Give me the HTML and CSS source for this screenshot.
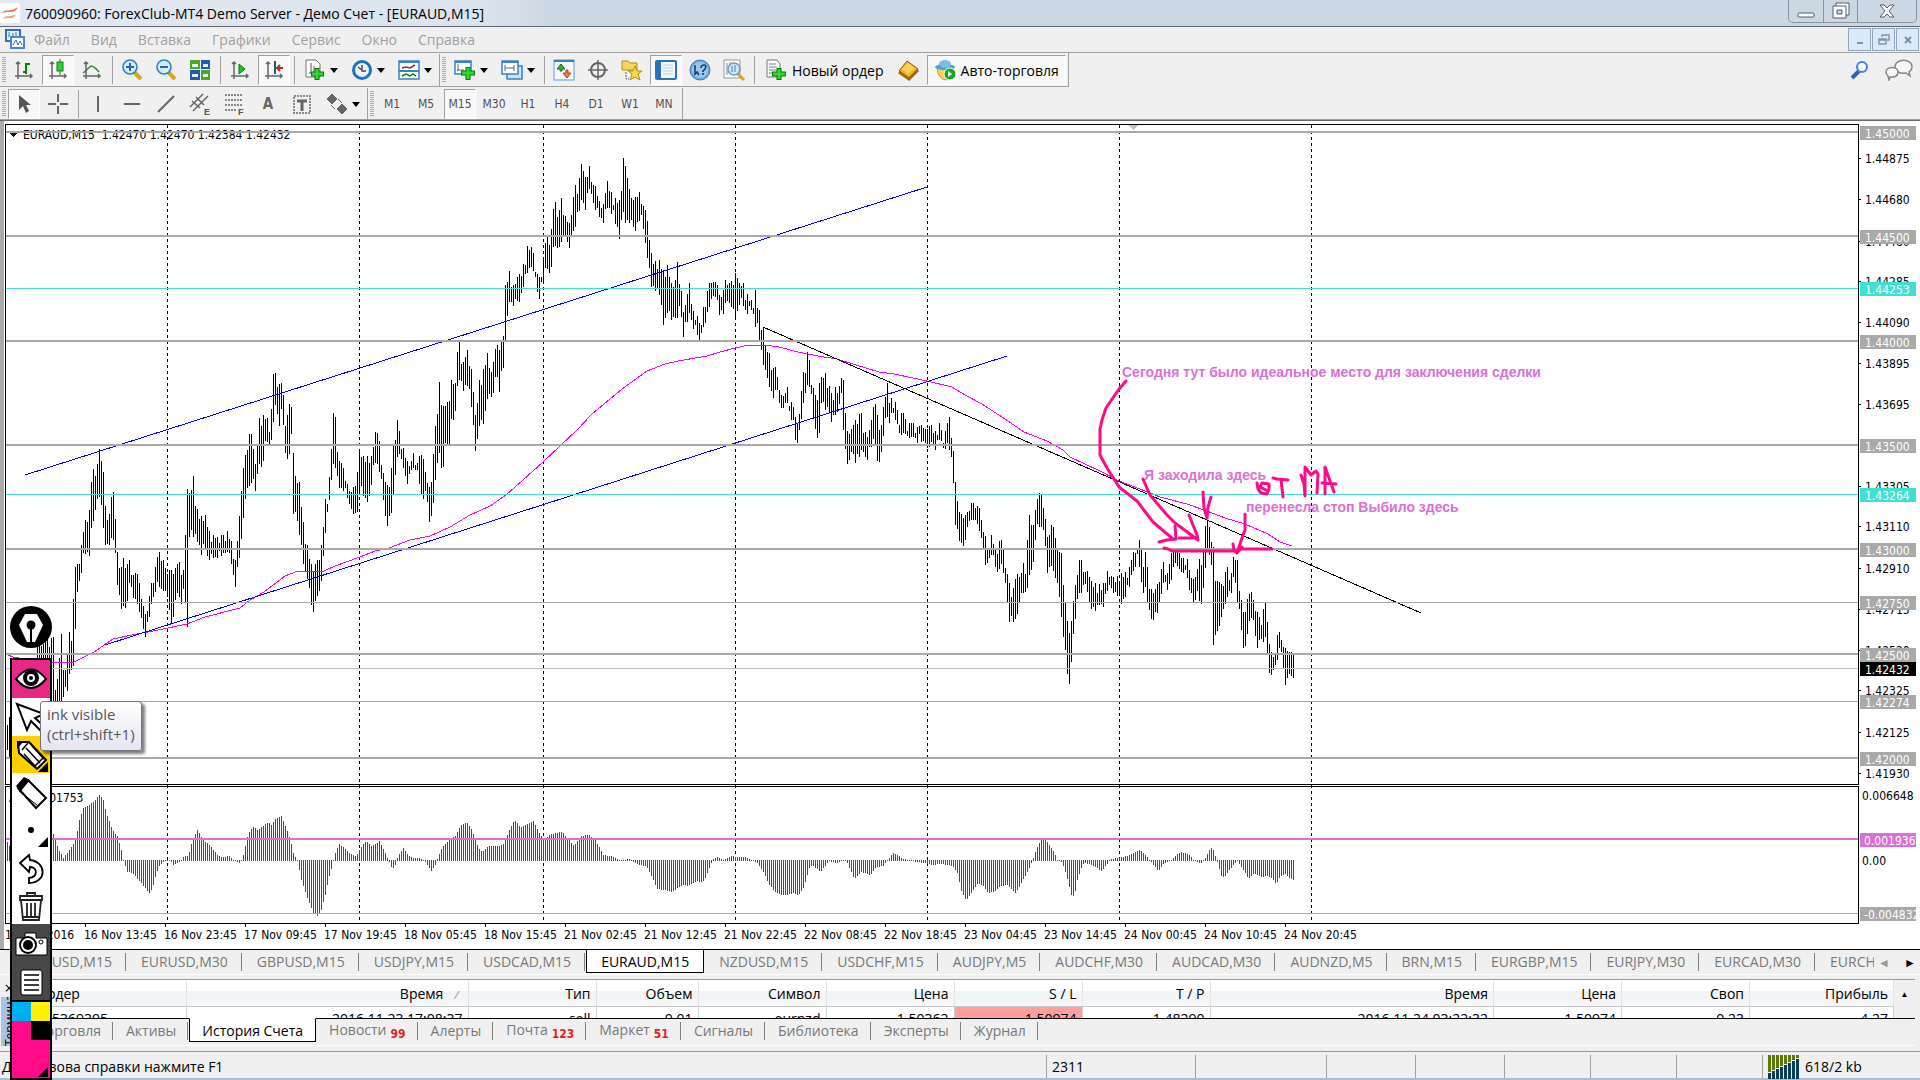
FILE: index.html
```
<!DOCTYPE html>
<html lang="ru">
<head>
  <meta charset="utf-8">
  <title>ForexClub-MT4</title>
  <link rel="stylesheet" href="styles.css">
</head>
<body>
  <header class="titlebar">
    <svg class="app-icon" width="20" height="20" viewBox="0 0 20 20"><rect width="20" height="20" rx="2" fill="#fff"/><path d="M2 10c4-5 7 0 16-6-2 5-6 5-9 5s-4 0-7 1z" fill="#f07840"/><path d="M3 16c3-5 7-1 13-5-2 5-6 4-8 4s-3 0-5 1z" fill="#f2a070"/></svg>
    <h1>760090960: ForexClub-MT4 Demo Server - Демо Счет - [EURAUD,M15]</h1>
    <div class="win-buttons">
      <button aria-label="Свернуть"><svg width="18" height="18"><rect x="1" y="11" width="16" height="4" rx="1" fill="#fff" stroke="#555a68"/></svg></button>
      <button aria-label="Развернуть"><svg width="18" height="18"><path d="M4 1h13v12H4z" fill="#fff" stroke="#555a68"/><path d="M1 4h13v12H1z" fill="#fff" stroke="#555a68"/><path d="M5 8h5v4H5z" fill="#ccd5e2" stroke="#555a68"/></svg></button>
      <button class="wide" aria-label="Закрыть"><svg width="18" height="18"><path d="M2 3h4l3 3 3-3h4l-5 6 5 6h-4l-3-3-3 3H2l5-6z" fill="#fff" stroke="#555a68"/></svg></button>
    </div>
  </header>

  <nav class="menubar">
    <svg width="22" height="22" viewBox="0 0 22 22"><path d="M2 1h14v11H2z" fill="#e8f2fc" stroke="#2f6fc4" stroke-width="2"/><path d="M5 3v5M9 4v5M12 3v4" stroke="#2f6fc4"/><path d="M7 8h13v11H7z" fill="#fff" stroke="#4a86d8" stroke-width="2"/><path d="M9 16l3-5 2 5 2-4 2 4" fill="none" stroke="#2f6fc4"/></svg>
    <button>Файл</button><button>Вид</button><button>Вставка</button><button>Графики</button><button>Сервис</button><button>Окно</button><button>Справка</button>
    <div class="mdi-buttons">
      <button aria-label="Свернуть окно"><svg width="12" height="12"><path d="M3 9h6" stroke="#7f93a8" stroke-width="2"/></svg></button>
      <button aria-label="Восстановить окно"><svg width="12" height="12"><path d="M4 3V1h7v5H9M1 5h7v5H1zM1 6h7" fill="none" stroke="#7f93a8" stroke-width="1.4"/></svg></button>
      <button aria-label="Закрыть окно"><svg width="12" height="12"><path d="M3 3l6 6M9 3l-6 6" stroke="#7f93a8" stroke-width="2"/></svg></button>
    </div>
  </nav>

  <div class="toolbar-row">
    <div class="toolbar">
      <i class="grip"></i>
      <button aria-label="Бары"><svg class="ic"><path d="M5 3v17M2 17h17M3 5l2-2 2 2M17 15l2 2-2 2" class="ax thin"/><path d="M13 4v11M13 5h4M10 13h3" stroke="#080" stroke-width="2"/></svg></button>
      <button class="on" aria-label="Свечи"><svg class="ic"><path d="M5 3v17M2 17h17M3 5l2-2 2 2M17 15l2 2-2 2" class="ax thin"/><path d="M13 0v16" stroke="#080"/><rect x="10" y="3" width="6" height="9" fill="#3c4" stroke="#080"/></svg></button>
      <button aria-label="Линия"><svg class="ic"><path d="M5 3v17M2 17h17M3 5l2-2 2 2M17 15l2 2-2 2" class="ax thin"/><path d="M2 14l8-7q3 0 8 6" fill="none" stroke="#3a8a3a" stroke-width="1.6"/></svg></button>
      <i class="sep"></i>
      <button aria-label="Увеличить"><svg class="ic"><path d="M13 13l7 7" stroke="#d9a520" stroke-width="4"/><circle cx="9" cy="8" r="7" fill="#d5ecfc" stroke="#2e7fc8" stroke-width="1.6"/><path d="M5 8h8M9 4v8" stroke="#2468b0" stroke-width="2"/></svg></button>
      <button aria-label="Уменьшить"><svg class="ic"><path d="M13 13l7 7" stroke="#d9a520" stroke-width="4"/><circle cx="9" cy="8" r="7" fill="#d5ecfc" stroke="#2e7fc8" stroke-width="1.6"/><path d="M5 8h8" stroke="#2468b0" stroke-width="2"/></svg></button>
      <button aria-label="Расположить окна"><svg class="ic"><path d="M1 1h10v9H1zM12 11h9v10h-9z" fill="#4ca820"/><path d="M12 1h9v9h-9zM1 11h10v10H1z" fill="#2458b8"/><path d="M3 5h6v3H3zM14 5h5v3h-5zM3 15h6v3H3zM14 15h5v3h-5z" fill="#e6f2e0"/></svg></button>
      <i class="sep"></i>
      <button aria-label="Автопрокрутка"><svg class="ic"><path d="M5 3v17M2 17h17M3 5l2-2 2 2M17 15l2 2-2 2" class="ax thin"/><path d="M10 5l6 5-6 5z" fill="#2ab52a" stroke="#080"/></svg></button>
      <button class="on" aria-label="Сдвиг графика"><svg class="ic"><path d="M5 3v17M2 17h17M3 5l2-2 2 2M17 15l2 2-2 2" class="ax thin"/><path d="M12 2v13" stroke="#1a5a90" stroke-width="2"/><path d="M14 9h6M17 6l-3 3 3 3" fill="none" stroke="#b03010" stroke-width="2"/></svg></button>
      <i class="sep"></i>
      <button class="drop" aria-label="Индикаторы"><svg class="ic"><path d="M2 1h10l4 4v13H2z" fill="#fff" stroke="#777"/><path d="M7 4v10M10 7v7M5 14h7" stroke="#555"/><path d="M13 9v12M7 15h13" stroke="#087808" stroke-width="5"/><path d="M13 10v10M8 15h11" stroke="#2fd72f" stroke-width="3"/></svg></button>
      <button class="drop" aria-label="Периоды"><svg class="ic"><circle cx="11" cy="11" r="10" fill="#1f6fc6"/><circle cx="11" cy="11" r="7" fill="#eef7ff"/><path d="M11 6v6h4M11 11L7 8" fill="none" stroke="#444" stroke-width="1.4"/></svg></button>
      <button class="drop" aria-label="Шаблоны"><svg class="ic"><rect x="1" y="2" width="20" height="18" fill="#fff" stroke="#3a80c8" stroke-width="1.5"/><path d="M1 3h20M1 12h20" stroke="#3a80c8" stroke-width="2"/><path d="M4 9l4-1 4 1 5-3" fill="none" stroke="#a03010" stroke-width="1.5"/><path d="M4 17l4-2 4 2 3-2 3 2" fill="none" stroke="#080" stroke-width="1.5"/></svg></button>
      <i class="edge"></i>
      <i class="grip"></i>
      <button class="drop" aria-label="Новый график"><svg class="ic"><rect x="1" y="2" width="16" height="13" fill="#fff" stroke="#3a80c8" stroke-width="1.5"/><path d="M1 3h16" stroke="#3a80c8" stroke-width="2"/><path d="M4 5v7M3 11h7" stroke="#567"/><path d="M14 8v13M7 14h14" stroke="#087808" stroke-width="5"/><path d="M14 9v11M8 14h12" stroke="#2fd72f" stroke-width="3"/></svg></button>
      <button class="drop" aria-label="Профили"><svg class="ic"><rect x="6" y="7" width="15" height="13" fill="#cfe4f8" stroke="#3a80c8" stroke-width="1.5"/><rect x="1" y="2" width="16" height="13" fill="#fff" stroke="#3a80c8" stroke-width="1.5"/><path d="M1 3h16" stroke="#3a80c8" stroke-width="2"/><path d="M4 6v6M4 9h9M13 6v6" stroke="#567"/></svg></button>
      <i class="sep"></i>
      <button aria-label="Обзор рынка"><svg class="ic"><rect x="1" y="1" width="20" height="20" fill="#f4faff" stroke="#5a9ad8"/><path d="M1 2h20" stroke="#3a80c8" stroke-width="2"/><path d="M8 5l4 5H9v2H7v-2H4z" fill="#2ab52a" stroke="#187018"/><path d="M14 19l-4-5h3v-3h2v3h3z" fill="#f07a40" stroke="#c83a10"/></svg></button>
      <button aria-label="Окно данных"><svg class="ic"><circle cx="11" cy="11" r="7" fill="none" stroke="#666" stroke-width="2"/><path d="M11 1v20M1 11h20" stroke="#666" stroke-width="1.5"/></svg></button>
      <button aria-label="Навигатор"><svg class="ic"><path d="M1 2h6l2 2h7v7H1z" fill="#f6d65c" stroke="#b98a10"/><path d="M5 13v7h3" fill="none" stroke="#555" stroke-dasharray="2 1"/><path d="M14 7l2 5h5l-4 3 2 6-5-3-5 3 2-6-4-3h5z" fill="#fbd94a" stroke="#b98a10"/></svg></button>
      <button class="on" aria-label="Терминал"><svg class="ic"><rect x="1" y="2" width="20" height="18" rx="1" fill="#f4faff" stroke="#2a72c0" stroke-width="2"/><path d="M4 3v16" stroke="#2a72c0" stroke-width="4"/><path d="M8 6h10M8 9h10M8 12h10M8 15h10" stroke="#bcd"/></svg></button>
      <button aria-label="Помощь"><svg class="ic"><circle cx="11" cy="11" r="10" fill="#6fa8dc" stroke="#3c78b4"/><circle cx="11" cy="11" r="8" fill="#9cc6ec"/><path d="M6 6v9l2-2 2 3M12 9q0-3 3-3t1 4l-2 2v1M14 14v2" fill="none" stroke="#123f70" stroke-width="1.6"/></svg></button>
      <button aria-label="Тестер"><svg class="ic"><rect x="1" y="1" width="16" height="18" fill="#fafafa" stroke="#999"/><path d="M14 14l7 7" stroke="#d9a520" stroke-width="3"/><path d="M4 4v12M7 3v9" stroke="#888"/><circle cx="11" cy="10" r="6" fill="#cfe6fa" stroke="#6c9cc8" stroke-width="1.5"/><path d="M9 7v6M12 6v7" stroke="#579"/></svg></button>
      <i class="sep"></i>
      <button class="text new-order"><svg class="ic"><path d="M2 1h10l3 4v13H2z" fill="#fff" stroke="#777"/><path d="M4 5h7M4 8h8M4 11h8M4 14h5" stroke="#777"/><path d="M14 9v12M7 15h14" stroke="#087808" stroke-width="5"/><path d="M14 10v10M8 15h12" stroke="#2fd72f" stroke-width="3"/></svg>Новый ордер</button>
      <button aria-label="MetaEditor"><svg class="ic"><path d="M1 12L9 2l11 8-9 10z" fill="#efb629" stroke="#8c5b08"/><path d="M4 10l6-6 7 5-7 6z" fill="#f8cf5a"/><path d="M1 13l10 7 9-9" fill="none" stroke="#a06a10" stroke-width="3"/></svg></button>
      <button class="text on auto"><svg class="ic"><path d="M3 9h16l-7 12q-8-1-9-12z" fill="#f6d35a" stroke="#c09a20"/><ellipse cx="11" cy="8" rx="10" ry="3" fill="#4a9fd0"/><ellipse cx="11" cy="5" rx="6" ry="4" fill="#73bfe6"/><circle cx="16" cy="15" r="6" fill="#18a818" stroke="#fff"/><path d="M14 12l4 3-4 3z" fill="#fff"/></svg>Авто-торговля</button>
    </div>
    <div class="toolbar-end">
      <button aria-label="Поиск"><svg width="20" height="20"><path d="M2 18l7-7" stroke="#2d62c4" stroke-width="4"/><circle cx="12" cy="7" r="5" fill="#f4f8ff" stroke="#4a7fd6" stroke-width="2"/></svg></button>
      <button aria-label="Чат"><svg width="30" height="22"><path d="M11 8c0-9 17-9 17 0 0 3-2 4-3 5l1 4-4-3c-5 1-11-1-11-6z" fill="#f6f6f8" stroke="#888" stroke-width="1.5"/><path d="M2 13c0-6 12-6 12 0s-6 5-8 5l-1 3-1-4c-1-1-2-2-2-4z" fill="#f6f6f8" stroke="#888" stroke-width="1.5"/></svg></button>
    </div>
  </div>

  <div class="toolbar-row second">
    <div class="toolbar">
      <i class="grip"></i>
      <button class="on" aria-label="Курсор"><svg class="ic"><path d="M6 2v15l4-4 3 7 3-2-3-6h5z" fill="#555"/></svg></button>
      <button aria-label="Перекрестие"><svg class="ic"><path d="M11 1v8M11 13v8M1 11h8M13 11h8" class="ax"/></svg></button>
      <i class="sep"></i>
      <button aria-label="Вертикальная линия"><svg class="ic"><path d="M11 3v16" class="ax"/></svg></button>
      <button aria-label="Горизонтальная линия"><svg class="ic"><path d="M3 11h16" class="ax"/></svg></button>
      <button aria-label="Трендовая линия"><svg class="ic"><path d="M3 19L19 3" class="ax"/></svg></button>
      <button aria-label="Канал"><svg class="ic"><path d="M1 14L14 1M4 18L19 3M3 8l8 7M7 4l8 8" class="ax thin"/><text x="15" y="22">E</text></svg></button>
      <button aria-label="Фибоначчи"><svg class="ic"><path d="M2 2h18M2 7h18M2 12h18M2 17h11" class="ax thin" stroke-dasharray="2 1"/><text x="15" y="22">F</text></svg></button>
      <button aria-label="Текст" class="letter">A</button>
      <button aria-label="Метка"><svg class="ic"><rect x="3" y="3" width="16" height="17" class="ax thin" stroke-dasharray="2 1"/><path d="M6 8h10M11 8v10" stroke="#666" stroke-width="3"/></svg></button>
      <button class="drop" aria-label="Стрелки"><svg class="ic"><path d="M6 1l5 5-5 5-5-5zM16 11l5 5-5 5-5-5zM5 12l4 4M12 6l4 4" fill="#666" stroke="#666"/></svg></button>
      <i class="edge"></i>
      <i class="grip"></i>
      <button class="tf">M1</button><button class="tf">M5</button><button class="tf on">M15</button><button class="tf">M30</button><button class="tf">H1</button><button class="tf">H4</button><button class="tf">D1</button><button class="tf">W1</button><button class="tf">MN</button>
      <i class="edge"></i>
    </div>
  </div>

  <main class="chart">
    <svg id="plot" class="plot"></svg>
    <svg id="scale" class="scale"></svg>
  </main>

  <div class="symbol-tabs">
    <button>EURUSD,M15</button><button>EURUSD,M30</button><button>GBPUSD,M15</button><button>USDJPY,M15</button><button>USDCAD,M15</button><button class="active">EURAUD,M15</button><button>NZDUSD,M15</button><button>USDCHF,M15</button><button>AUDJPY,M5</button><button>AUDCHF,M30</button><button>AUDCAD,M30</button><button>AUDNZD,M5</button><button>BRN,M15</button><button>EURGBP,M15</button><button>EURJPY,M30</button><button>EURCAD,M30</button><button class="last">EURCHF,M30</button>
    <div class="tab-arrows"><button class="off" aria-label="Назад">&#9668;</button><button aria-label="Вперед">&#9658;</button></div>
  </div>

  <section class="terminal">
    <aside class="side"><button aria-label="Закрыть терминал">×</button><span>Терминал</span></aside>
    <div class="history">
      <table>
        <colgroup><col class="c-order"><col class="c-open"><col class="c-std"><col class="c-vol"><col class="c-std"><col class="c-std"><col class="c-std"><col class="c-std"><col><col class="c-std"><col class="c-std"><col class="c-profit"></colgroup>
        <thead><tr><th class="left">Ордер</th><th class="sorted">Время <small>⁄</small></th><th>Тип</th><th>Объем</th><th>Символ</th><th>Цена</th><th>S / L</th><th>T / P</th><th>Время</th><th>Цена</th><th>Своп</th><th>Прибыль</th></tr></thead>
        <tbody><tr><td class="left">155369395</td><td>2016.11.23 17:08:37</td><td>sell</td><td>0.01</td><td>eurnzd</td><td>1.50362</td><td class="hit">1.50974</td><td>1.48290</td><td>2016.11.24 03:22:32</td><td>1.50974</td><td>0.23</td><td>4.27</td></tr></tbody>
      </table>
      <div class="scroll"><button aria-label="Вверх">▲</button><button aria-label="Вниз">▼</button></div>
    </div>
    <div class="terminal-tabs">
      <button>Торговля</button><button>Активы</button><button class="active">История Счета</button><button>Новости<sub>99</sub></button><button>Алерты</button><button>Почта<sub>123</sub></button><button>Маркет<sub>51</sub></button><button>Сигналы</button><button>Библиотека</button><button>Эксперты</button><button>Журнал</button>
    </div>
  </section>

  <footer class="status">
    <span class="hint">Для вызова справки нажмите F1</span><span class="profile">2311</span><span class="w131"></span><span class="w89"></span><span class="w89"></span><span class="w86"></span><span class="w86"></span><span class="w86"></span>
    <span class="traffic"><svg id="traffic" width="32" height="24"></svg>618/2 kb</span>
  </footer>

  <!-- floating ink palette -->
  <div class="palette">
    <button class="pen" aria-label="pen"><svg width="42" height="42" viewBox="0 0 42 42"><circle cx="21" cy="21" r="21"/><path d="M15 8h12l6 11-8 17h-8L9 19z" fill="#fff"/><circle cx="21" cy="19" r="4.500"/><path d="M21 19v18" stroke="#000" stroke-width="2"/></svg></button>
    <div class="tools">
      <button class="pink" aria-label="ink visible"><svg class="tool"><path d="M4 19q15-19 30 0-15 18-30 0z" fill="#fff" stroke="#000" stroke-width="2"/><circle cx="19" cy="18" r="8"/><circle cx="19" cy="18" r="3" fill="none" stroke="#fff" stroke-width="2"/></svg></button>
      <button aria-label="cursor"><svg class="tool"><path d="M5 6l10 26 4-9 10 10 4-4-10-9 9-4z" fill="#fff" stroke="#000" stroke-width="2"/></svg></button>
      <button class="yellow" aria-label="pencil"><svg class="tool"><path d="M6 6l11 0 17 18-9 9L7 17z" fill="#fff" stroke="#000" stroke-width="2"/><path d="M5 5h7l-7 8z"/><path d="M10 14l6-7M12 18l12 13M20 10l12 13M14 12l14 15M22 31l9-9" fill="none" stroke="#000" stroke-width="1.500"/><path d="M26 36h10V26z"/></svg></button>
      <button aria-label="eraser"><svg class="tool"><path d="M6 14l10-8 18 18-10 10z" fill="#fff" stroke="#000" stroke-width="2"/><path d="M4 12l8-9 6 3-9 11z"/><path d="M7 17l18 14" stroke="#000"/></svg></button>
      <button aria-label="size"><svg class="tool"><circle cx="19" cy="19" r="3"/><path d="M26 36h10V26z"/></svg></button>
      <button aria-label="undo"><svg class="tool"><path d="M8 14l9-8 1 5c17 2 17 23-1 23v-5c9-1 9-11 1-11l-1 5z" fill="#fff" stroke="#000" stroke-width="1.800"/></svg></button>
      <button aria-label="clear"><svg class="tool"><path d="M9 13h20l-2 20H11zM8 9h22v4H8zM15 9V6h8v3M15 16v13M19 16v13M23 16v13M11 30h16" fill="none" stroke="#222" stroke-width="1.800"/></svg></button>
      <button class="dark" aria-label="screenshot"><svg class="tool"><path d="M4 13h9V8h11v5h11v17H4z" fill="#fff" stroke="#000"/><circle cx="16" cy="20" r="8" fill="#fff" stroke="#000" stroke-width="2"/><circle cx="16" cy="20" r="5"/><circle cx="29" cy="17" r="2" fill="none" stroke="#000"/></svg></button>
      <button class="dark" aria-label="whiteboard"><svg class="tool"><rect x="9" y="7" width="21" height="25" rx="2" fill="#fff" stroke="#000"/><path d="M12 12h15M12 17h15M12 22h15M12 27h15" stroke="#000" stroke-width="1.600"/></svg></button>
      <div class="colors"><button class="cyan" aria-label="cyan"></button><button class="lemon" aria-label="yellow"></button><button class="magenta" aria-label="magenta"></button><button class="black" aria-label="black"></button><button class="current" aria-label="current color"><svg class="tool"><path d="M26 36h10V26z"/></svg></button></div>
    </div>
    <div class="tooltip">ink visible<br>(ctrl+shift+1)</div>
  </div>

  <script src="chart.js"></script>
</body>
</html>
```
FILE: styles.css
```
:root {
  --face: #f0f0f0;
  --line: #a0a0a0;
  --ui: "Open Sans", "Noto Sans", sans-serif;
  --small: "DejaVu Sans Condensed", "DejaVu Sans", sans-serif;
}

* {
  box-sizing: border-box;
}
body {
  margin: 0;
  height: 100vh;
  display: flex;
  flex-direction: column;
  overflow: hidden;
  background: var(--face);
  font-family: var(--ui);
  font-size: 14px;
  color: #000;
}
button {
  font: inherit;
  color: inherit;
  background: none;
  border: 0;
  padding: 0;
  margin: 0;
  flex-shrink: 0;
}
svg {
  display: block;
  flex-shrink: 0;
}

/* title and menu */
.titlebar {
  display: flex;
  align-items: center;
  height: 27px;
  flex-shrink: 0;
  background: linear-gradient(90deg, #e3e9f0, #dbe3ec 480px, #ccd7e4 560px, #ccd7e4);
  border-bottom: 1px solid #5f6570;
}
.titlebar h1 {
  margin: 0 auto 0 5px;
  font-size: 14px;
  font-weight: 400;
  white-space: nowrap;
}
.win-buttons {
  display: flex;
  align-self: flex-start;
  height: 23px;
  margin-right: 3px;
  border: 1px solid #8a93a2;
  border-top: 0;
  border-radius: 0 0 5px 5px;
}
.win-buttons button {
  width: 34px;
  display: flex;
  justify-content: center;
  align-items: center;
}
.win-buttons button + button {
  border-left: 1px solid #8a93a2;
}
.win-buttons .wide {
  width: 59px;
}
.menubar {
  display: flex;
  align-items: center;
  height: 26px;
  flex-shrink: 0;
  padding-left: 4px;
  color: #a0a0a0;
  border-bottom: 1px solid var(--line);
}
.menubar > button {
  margin-left: 8px;
  padding-right: 13px;
}
.mdi-buttons {
  display: flex;
  gap: 1px;
  margin: 0 1px 0 auto;
}
.mdi-buttons button {
  width: 23px;
  height: 23px;
  display: grid;
  place-items: center;
  background: #dce9f6;
  border: 1px solid #8fa5bb;
}

/* toolbars */
.toolbar-row {
  display: flex;
  justify-content: space-between;
  height: 34px;
  flex-shrink: 0;
}
.toolbar-row.second {
  border-bottom: 1px solid #696969;
  box-shadow: inset 0 -1px var(--line);
}
.toolbar {
  display: flex;
  align-items: center;
  padding: 1px 0 0;
}
.toolbar-row:not(.second) .toolbar {
  border-right: 1px solid var(--line);
  border-bottom: 1px solid var(--line);
}
.toolbar button {
  width: 32px;
  height: 30px;
  margin-right: 2px;
  display: flex;
  align-items: center;
  justify-content: center;
  border: 1px solid transparent;
}
.toolbar button.on {
  background: #f8f8f8;
  border-color: #a0a0a0 #fff #fff #a0a0a0;
}
.toolbar button.drop {
  width: 45px;
  gap: 4px;
}
.toolbar button.drop::after {
  content: "";
  border: 4px solid transparent;
  border-top: 5px solid #000;
  border-bottom: 0;
}
.toolbar button.text {
  width: auto;
  gap: 5px;
  padding: 0 6px;
}
.toolbar button.letter {
  font: bold 15px var(--small);
  color: #666;
}
.toolbar button.tf {
  font: 12px var(--small);
  color: #505050;
}
.ic {
  width: 22px;
  height: 22px;
  overflow: visible;
}
.ic text {
  font: bold 9px "Liberation Sans", sans-serif;
  fill: #555;
}
.ax {
  fill: none;
  stroke: #666;
  stroke-width: 2;
}
.ax.thin {
  stroke-width: 1.5;
}
.grip {
  width: 4px;
  height: 26px;
  margin: 0 2px;
  background: repeating-linear-gradient(#aaa 0 1px, #f0f0f0 1px 2px);
}
.sep,
.edge {
  width: 1px;
  height: 28px;
  margin: 0 3px 0 2px;
  background: var(--line);
}
.edge {
  height: 32px;
  margin: 0;
}
.toolbar-end {
  display: flex;
  align-items: center;
  gap: 14px;
  padding-right: 6px;
}

/* chart */
.chart {
  display: flex;
  flex: 1;
  min-height: 0;
  background: #fff;
  border-left: 4px solid #ababab;
  font-family: var(--small);
  font-size: 12px;
}
.chart text {
  white-space: pre;
}
.plot {
  flex: 1;
  min-width: 0;
  height: 100%;
  shape-rendering: crispEdges;
}
.scale {
  width: 62px;
  height: 100%;
  shape-rendering: crispEdges;
}
.note {
  font: bold 14px "Liberation Sans", Arial, sans-serif;
  fill: #da70d6;
}
.ink path {
  fill: none;
  stroke: #ff0a89;
  stroke-width: 3;
  stroke-linecap: round;
  stroke-linejoin: round;
  shape-rendering: auto;
}

/* symbol tabs */
.symbol-tabs,
.terminal-tabs {
  display: flex;
  gap: 1px;
  height: 26px;
  flex-shrink: 0;
  color: #787878;
  border-top: 1px solid #000;
  border-bottom: 1px solid #fff;
}
.symbol-tabs {
  position: relative;
  padding-left: 11px;
  overflow: hidden;
}
.symbol-tabs > button,
.terminal-tabs button {
  position: relative;
  height: 24px;
  padding: 0 14px;
  margin-top: -1px;
  white-space: nowrap;
}
.symbol-tabs > button::after,
.terminal-tabs button::after {
  content: "";
  position: absolute;
  right: 0;
  top: 4px;
  height: 18px;
  border-right: 1px solid #808080;
}
.symbol-tabs .active,
.terminal-tabs .active {
  color: #000;
  background: #fff;
  border: 1px solid #000;
  border-top-color: #fff;
}
.symbol-tabs .active::after,
.terminal-tabs .active::after {
  content: none;
}
.symbol-tabs .last {
  flex: 1;
  min-width: 0;
  text-align: left;
}
.tab-arrows {
  position: absolute;
  right: 0;
  top: 0;
  width: 46px;
  height: 24px;
  display: flex;
  gap: 14px;
  padding-left: 4px;
  background: var(--face);
  font-size: 12px;
  color: #000;
}
.tab-arrows .off {
  color: #999;
}

/* terminal */
.terminal {
  display: grid;
  grid-template-columns: 18px 1fr;
  grid-template-rows: 39px 28px;
  flex-shrink: 0;
  margin-top: 4px;
  padding-right: 5px;
}
.side {
  grid-row: 1 / 3;
  display: flex;
  flex-direction: column;
  align-items: center;
  font-size: 12px;
}
.side button {
  height: 18px;
  line-height: 14px;
  font-size: 16px;
}
.side span {
  writing-mode: vertical-rl;
  transform: rotate(180deg);
  height: 49px;
  overflow: hidden;
  background: #a9c4e2;
}
.history {
  display: flex;
  overflow: hidden;
  background: #fff;
  border-top: 1px solid #999;
}
.history table {
  flex: 1;
  table-layout: fixed;
  border-collapse: collapse;
}
.history th,
.history td {
  padding: 0 5px;
  text-align: right;
  font-weight: 400;
  white-space: nowrap;
  line-height: 20px;
  border-right: 1px solid #d0d0d0;
}
.history th {
  height: 26px;
  padding-top: 3px;
  background: linear-gradient(#fff 40%, #f2f3f5 45%, #f5f6f8);
  border-right-color: #e2e4e6;
  border-bottom: 1px solid #c8c8c8;
}
.history td {
  height: 22px;
  padding-top: 2px;
}
.history .left {
  text-align: left;
  padding-left: 18px;
}
.history .hit {
  background: #ff9f9f;
}
.history .sorted small {
  padding: 0 5px 0 9px;
  color: #777;
}
.c-order { width: 168px; }
.c-open { width: 282px; }
.c-std { width: 128px; }
.c-vol { width: 102px; }
.c-profit { width: 144px; }
.scroll {
  width: 21px;
  display: flex;
  flex-direction: column;
  align-items: center;
  gap: 14px;
  padding-top: 8px;
  background: var(--face);
  font-size: 8px;
  line-height: 12px;
}
.terminal-tabs {
  height: 28px;
}
.terminal-tabs button {
  padding: 0 12px;
}
.terminal-tabs button:first-child {
  padding-left: 20px;
}
.terminal-tabs sub {
  margin-left: 4px;
  font: bold 12px/12px var(--small);
  color: #e81e1e;
}

/* status bar */
.status {
  display: flex;
  height: 29px;
  flex-shrink: 0;
  margin-top: 5px;
  padding: 3px 0 0;
  border-top: 1px solid #999;
  border-bottom: 2px solid #a5bfd8;
}
.status > span {
  border-left: 1px solid var(--line);
  padding-left: 5px;
  line-height: 24px;
}
.status .hint {
  flex: 1;
  border: 0;
  padding-left: 2px;
}
.profile { width: 149px; }
.w131 { width: 131px; }
.w89 { width: 89px; }
.w86 { width: 86px; }
.traffic {
  width: 158px;
  display: flex;
  gap: 5px;
}

/* ink palette */
.palette {
  position: absolute;
  left: 10px;
  top: 606px;
  width: 42px;
}
.pen {
  display: block;
  margin-bottom: 10px;
}
.tools {
  display: grid;
  grid-template-rows: repeat(9, 1fr) auto;
  height: 422px;
  background: #fff;
  border: 2px solid #000;
}
.tools > button {
  width: 38px;
}
.tool {
  width: 38px;
  height: 37px;
}
.pink { background: #e62887; }
.yellow { background: #ffd000; }
.dark { background: #474747; }
.colors {
  display: grid;
  grid-template-columns: 19px 19px;
  grid-template-rows: 19px 19px 38px;
  border-top: 2px solid #000;
}
.cyan { background: #00adef; }
.lemon { background: #fff200; }
.black { background: #000; }
.magenta,
.current { background: #ff0a89; }
.current { grid-column: 1 / 3; }
.tooltip {
  position: absolute;
  left: 30px;
  top: 95px;
  padding: 2px 6px 6px;
  white-space: nowrap;
  font-size: 15px;
  line-height: 20px;
  color: #575757;
  background: linear-gradient(#fff, #e4e5f0);
  border: 1px solid #767676;
  border-radius: 3px;
  box-shadow: 3px 3px 3px rgba(0, 0, 0, .5);
}
```
FILE: chart.js
```
const NS = 'http://www.w3.org/2000/svg';
const TOP = 121;   // chart starts below title, menu and toolbars
const LEFT = 4;

const plot = document.getElementById('plot');
const scale = document.getElementById('scale');

function add(parent, tag, attrs, text) {
  const el = document.createElementNS(NS, tag);
  for (const key in attrs) el.setAttribute(key, attrs[key]);
  if (text) el.textContent = text;
  parent.appendChild(el);
  return el;
}

const priceY = price => Math.round(132 + (1.45 - price) * 20867);

// x, high, low
const ranges = [
  [5,707,748],[7,725,750],[9,717,757],[12,700,750],[30,680,730],[38,636,700],[51,638,700],[53,637,701],[55,690,720],[61,634,720],[63,670,697],[67,655,691],[69,632,674],[72,632,670],
  [74,566,662],[76,568,596],[80,552,579],[84,522,554],[89,510,556],[92,466,526],[95,476,510],[97,464,499],[99,449,497],[102,455,520],[105,506,545],[109,514,545],[112,482,543],[114,502,537],
  [117,552,585],[120,572,610],[123,558,606],[126,566,610],[129,560,583],[133,575,598],[136,570,600],[139,583,612],[142,602,625],[145,614,637],[148,602,623],[151,583,604],[154,572,594],[158,551,585],
  [162,556,591],[165,568,591],[170,564,617],[172,575,631],[174,572,602],[178,556,594],[181,575,604],[184,558,591],[187,489,627],[189,493,537],[193,476,537],[196,506,537],[200,518,558],[204,510,545],
  [208,529,560],[212,535,558],[217,537,558],[221,535,556],[227,531,552],[231,541,564],[235,560,587],[238,529,566],[240,503,549],[243,468,518],[248,434,487],[251,434,483],[255,464,491],[259,418,464],
  [262,415,468],[266,415,439],[270,426,449],[273,374,422],[275,373,405],[279,384,426],[282,380,411],[285,426,453],[288,403,464],[291,407,434],[293,453,514],[296,483,514],[299,482,535],[303,522,564],
  [307,545,579],[310,560,602],[313,571,612],[316,552,596],[318,568,596],[321,545,581],[325,499,533],[328,491,510],[331,449,480],[333,413,464],[335,417,468],[338,460,487],[342,464,489],[346,480,495],
  [350,495,507],[353,487,514],[356,484,520],[359,449,495],[362,457,493],[366,453,505],[370,464,493],[374,432,462],[378,432,466],[382,468,491],[386,487,527],[390,480,522],[393,445,495],[397,420,457],
  [402,445,464],[407,461,484],[413,453,468],[418,457,478],[422,453,503],[425,472,491],[429,487,522],[432,468,514],[435,426,480],[439,382,453],[442,411,476],[446,392,438],[448,411,453],[452,369,418],
  [454,399,422],[458,334,376],[462,365,392],[467,350,386],[471,369,407],[475,415,451],[479,380,426],[483,369,424],[487,353,399],[492,369,401],[496,342,369],[499,350,392],[502,334,365],[504,338,371],
  [505,285,342],[509,271,302],[513,285,306],[518,275,306],[522,269,290],[527,246,273],[532,246,265],[536,273,288],[539,277,299],[542,265,285],[546,233,267],[550,239,275],[554,197,244],[558,216,250],
  [561,198,242],[565,216,235],[569,223,248],[574,185,231],[578,185,216],[581,164,200],[585,177,210],[589,166,189],[594,181,208],[598,200,216],[603,204,223],[607,181,208],[614,197,220],[619,200,239],
  [621,191,220],[623,158,212],[625,166,223],[629,189,223],[634,200,235],[638,187,220],[642,208,223],[644,204,235],[647,221,258],[650,250,285],[654,262,292],[658,258,288],[663,270,325],[667,265,313],
  [671,283,320],[673,287,317],[677,262,318],[680,280,307],[683,312,337],[686,300,327],[689,283,313],[692,310,327],[696,312,333],[699,323,340],[703,307,327],[705,307,323],[708,282,313],[710,283,300],
  [714,281,295],[717,285,300],[719,295,315],[722,295,320],[725,280,303],[730,282,303],[734,278,317],[735,273,318],[739,283,305],[742,280,303],[746,293,315],[751,300,310],[754,298,320],[755,290,327],
  [758,312,333],[759,310,340],[761,330,350],[763,327,365],[766,352,373],[769,353,387],[772,373,398],[774,363,397],[776,370,383],[779,390,403],[782,397,410],[785,393,403],[787,387,403],[790,400,420],
  [793,407,420],[795,417,440],[797,423,443],[800,400,427],[803,372,403],[805,373,393],[807,352,385],[809,360,387],[812,383,410],[814,393,425],[817,400,438],[819,383,433],[821,377,403],[825,373,410],
  [828,383,407],[831,393,422],[835,387,415],[838,390,410],[841,378,393],[843,380,430],[846,425,460],[848,437,467],[850,430,453],[852,427,450],[855,420,463],[858,415,460],[861,413,450],[864,430,455],
  [867,437,460],[870,427,447],[872,413,447],[874,400,430],[876,407,460],[879,430,462],[882,417,448],[884,397,423],[886,397,413],[887,383,417],[889,403,423],[891,398,413],[895,402,420],[900,418,437],
  [902,407,433],[904,418,433],[908,423,438],[913,423,437],[917,427,443],[920,423,442],[924,430,440],[928,427,450],[931,425,442],[934,433,452],[939,423,440],[944,435,452],[947,423,443],[949,417,450],
  [951,438,457],[953,451,483],[955,482,525],[958,510,540],[960,513,542],[964,517,547],[967,512,527],[972,500,520],[976,510,520],[978,502,527],[981,520,538],[984,530,566],[987,548,563],[991,535,555],
  [995,550,567],[998,547,577],[1000,535,560],[1003,550,573],[1006,570,593],[1009,583,622],[1012,593,622],[1016,573,620],[1019,577,603],[1023,563,593],[1026,567,593],[1028,512,583],[1030,517,567],
  [1032,533,573],[1035,510,540],[1038,492,527],[1041,495,527],[1044,510,533],[1047,537,573],[1052,520,567],[1054,533,575],[1057,548,583],[1061,553,617],[1063,585,637],[1066,608,665],[1068,633,683],
  [1070,633,684],[1072,608,640],[1074,593,627],[1078,560,593],[1081,560,593],[1086,568,587],[1090,580,608],[1094,583,613],[1098,583,603],[1102,587,612],[1106,570,590],[1112,577,593],[1116,577,593],
  [1120,573,605],[1124,573,600],[1129,567,587],[1132,552,573],[1135,553,567],[1138,538,557],[1140,542,577],[1143,567,593],[1145,552,587],[1147,567,603],[1150,587,618],[1153,593,620],[1156,587,617],
  [1160,573,600],[1163,562,583],[1167,573,590],[1171,553,580],[1173,548,567],[1178,550,568],[1182,560,573],[1186,553,572],[1189,570,590],[1192,580,603],[1195,577,600],[1198,560,587],[1200,557,615],
  [1202,572,593],[1204,532,583],[1206,520,553],[1208,520,550],[1210,533,560],[1212,550,570],[1213,547,645],[1216,585,630],[1218,577,632],[1220,587,620],[1224,575,607],[1227,567,597],[1231,573,593],
  [1233,557,577],[1237,560,603],[1240,597,617],[1242,603,643],[1244,620,652],[1246,603,640],[1250,588,617],[1253,600,620],[1256,610,652],[1259,617,640],[1262,620,650],[1264,598,633],[1266,607,640],
  [1268,637,667],[1270,650,678],[1273,657,670],[1276,640,667],[1278,630,652],[1280,633,643],[1282,647,660],[1285,648,685],[1288,653,675],[1290,650,673],[1292,653,678]
];

// x, height over the zero line
const momentum = [
  [5,21],[9,14],[12,8],[30,20],[40,40],[53,26],[56,17],[59,9],[63,2],[67,7],[74,17],[76,24],[79,40],[83,52],[89,55],[95,60],[99,65],[103,60],[106,47],[112,30],[117,24],[121,10],[123,0],[127,-12],[132,-13],
  [138,-20],[144,-27],[149,-33],[152,-29],[156,-13],[159,-6],[163,-2],[169,0],[173,-5],[179,-2],[181,0],[184,4],[188,4],[192,20],[197,30],[203,20],[210,14],[217,5],[222,3],[229,4],[233,0],[239,-3],[242,0],
  [244,10],[248,27],[253,33],[257,30],[263,34],[268,38],[271,35],[275,41],[281,44],[286,32],[290,20],[293,7],[297,-1],[301,-20],[308,-41],[313,-53],[317,-56],[321,-50],[325,-35],[328,-20],[333,-1],[335,7],
  [339,16],[344,12],[350,6],[356,4],[360,12],[366,19],[371,14],[376,16],[379,19],[384,9],[388,0],[392,-10],[395,-5],[398,5],[403,12],[408,5],[413,2],[420,2],[423,0],[428,-6],[431,-11],[435,-5],[438,4],
  [442,13],[448,19],[455,24],[460,34],[466,38],[472,29],[478,12],[482,8],[488,14],[493,14],[499,14],[504,17],[509,30],[514,40],[520,33],[527,36],[533,39],[539,27],[544,20],[549,25],[556,27],[562,28],[565,24],
  [574,14],[580,24],[589,25],[595,20],[603,5],[609,4],[614,3],[621,-1],[625,0],[629,1],[636,-4],[643,-6],[646,-6],[652,-18],[657,-29],[663,-30],[671,-32],[676,-29],[683,-25],[688,-26],[696,-21],
  [700,-23],[704,-20],[709,-8],[712,0],[717,3],[723,0],[731,4],[738,3],[745,3],[750,0],[756,-2],[762,-10],[769,-25],[774,-31],[780,-35],[787,-35],[794,-33],[798,-36],[804,-26],[809,-8],[812,-5],[820,-12],
  [825,-6],[829,-1],[836,-3],[843,0],[846,-1],[854,-19],[861,-12],[870,-15],[876,-7],[883,-6],[887,0],[893,7],[896,6],[903,1],[908,0],[916,-2],[923,-3],[932,-5],[941,-4],[952,-6],[957,-13],[961,-31],
  [966,-41],[970,-35],[977,-24],[982,-25],[988,-33],[994,-32],[999,-27],[1007,-25],[1015,-33],[1020,-25],[1028,-10],[1033,2],[1038,16],[1041,20],[1046,20],[1053,9],[1057,0],[1062,-3],[1066,-15],[1071,-35],
  [1074,-36],[1077,-20],[1082,-5],[1085,-3],[1093,-6],[1101,-11],[1106,-5],[1111,1],[1117,2],[1126,4],[1133,7],[1140,10],[1146,4],[1153,-5],[1158,-11],[1164,-3],[1171,0],[1178,7],[1181,8],[1189,5],
  [1193,0],[1200,-4],[1204,0],[1209,10],[1212,13],[1216,1],[1221,-16],[1224,-18],[1229,-10],[1237,-1],[1242,-8],[1248,-19],[1254,-13],[1262,-18],[1266,-15],[1271,-18],[1276,-24],[1280,-16],[1285,-14],[1289,-18],[1294,-20]
];

const average = '8,655 13,657 30,660 52,662 64,663 74,662 94,652 113,639 132,635 163,629 187,624 205,617 240,608 250,600 264,592 285,576 298,571 324,571 335,566 360,557 375,551 389,548 410,540 430,536 450,527 470,515 490,506 506,495 523,480 543,462 577,430 592,414 622,389 647,371 665,364 678,361 707,356 720,352 735,348 749,345 764,345 779,347 798,352 818,356 837,359 856,365 879,372 894,374 927,381 952,387 965,395 982,404 1005,419 1024,432 1047,441 1063,450 1070,457 1100,471 1119,481 1140,489 1160,497 1187,504 1207,511 1225,518 1245,524 1268,534 1280,542 1292,546';

function at(points, x, col) {
  let i = 1;
  while (i < points.length - 1 && points[i][0] < x) i++;
  const a = points[i - 1], b = points[i];
  const t = Math.min(1, Math.max(0, (x - a[0]) / (b[0] - a[0])));
  return a[col] + (b[col] - a[col]) * t;
}

const g = add(plot, 'g', { transform: `translate(${-LEFT} ${-TOP})` });

for (const x of [167, 359, 543, 735, 927, 1119, 1311]) {
  add(g, 'path', { d: `M${x + 0.5} 125V923`, stroke: '#000', 'stroke-dasharray': '3 3' });
}

// price bars, one every two pixels; bars between the known ones are a bit shorter
const known = new Set(ranges.map(r => r[0] | 1));
let bars = '';
for (let x = 5; x <= 1293; x += 2) {
  let high = Math.round(at(ranges, x, 1));
  let low = Math.round(at(ranges, x, 2));
  if (!known.has(x) && low - high > 14) {
    high += x * 37 % 11;
    low -= x * 53 % 9;
  }
  bars += `M${x + 0.5} ${high}V${Math.max(low, high + 5)}`;
}
add(g, 'path', { d: bars, stroke: '#000' });

let up = '', down = '', last = 0;
for (let x = 5; x <= 1293; x += 2) {
  const v = Math.round(at(momentum, x, 1));
  const bar = `M${x + 0.5} ${v < 0 ? 860 : 861}V${860 - v}`;
  if (v > last || (v === last && x % 8 < 3)) up += bar; else down += bar;
  last = v;
}
add(g, 'path', { d: up, stroke: '#008000' });
add(g, 'path', { d: down, stroke: '#ff0000' });

add(g, 'polyline', { points: average, fill: 'none', stroke: '#ff00ff' });
add(g, 'path', { d: 'M25 475L927 187M105 645L1007 356', stroke: '#0000ff' });
add(g, 'path', { d: 'M763 327L1421 613', stroke: '#000' });

add(g, 'path', { d: 'M9 132h9l-4.500 5z' });
add(g, 'text', { x: 23, y: 139 }, 'EURAUD,M15  1.42470 1.42470 1.42384 1.42432');
add(g, 'text', { x: 9, y: 802 }, 'AO -0.001753');
add(g, 'path', { d: 'M1127 124h13l-6.500 6z', fill: '#c0c0c0' });

// levels run across the whole plot
const level = (y, color, width) => add(plot, 'line', { x1: 1, x2: '100%', y1: y - TOP, y2: y - TOP, stroke: color, 'stroke-width': width });
for (const p of [1.45, 1.445, 1.44, 1.435, 1.43, 1.425, 1.42]) level(priceY(p), '#a9a9a9', 2);
level(priceY(1.4275) + 0.5, '#a9a9a9', 1);
level(priceY(1.42274) + 0.5, '#a9a9a9', 1);
level(priceY(1.42432) + 0.5, '#c0c0c0', 1);
level(priceY(1.44253) + 0.5, '#40e0d0', 1);
level(priceY(1.43264) + 0.5, '#40e0d0', 1);
level(839, '#da70d6', 2);
level(913.5, '#a9a9a9', 1);
for (const y of [124.5, 784.5, 786.5, 923.5]) level(y, '#000', 1);
add(plot, 'path', { d: 'M1.500 3V664M1.500 665V803', stroke: '#000' });

// time scale
add(g, 'text', { x: 5, y: 939 }, '16 Nov 2016');
const times = ['16 Nov 13:45', '16 Nov 23:45', '17 Nov 09:45', '17 Nov 19:45', '18 Nov 05:45', '18 Nov 15:45', '21 Nov 02:45', '21 Nov 12:45', '21 Nov 22:45', '22 Nov 08:45', '22 Nov 18:45', '23 Nov 04:45', '23 Nov 14:45', '24 Nov 00:45', '24 Nov 10:45', '24 Nov 20:45'];
times.forEach((t, i) => {
  add(g, 'path', { d: `M${85.5 + i * 80} 924v3`, stroke: '#000' });
  add(g, 'text', { x: 84 + i * 80, y: 939 }, t);
});

// notes and ink lie over the levels
const over = add(plot, 'g', { transform: `translate(${-LEFT} ${-TOP})` });
add(over, 'text', { x: 1122, y: 377, class: 'note' }, 'Сегодня тут было идеальное место для заключения сделки');
add(over, 'text', { x: 1144, y: 480, class: 'note' }, 'Я заходила здесь');
add(over, 'text', { x: 1246, y: 512, class: 'note' }, 'перенесла стоп Выбило здесь');

const ink = add(over, 'g', { class: 'ink' });
[
  'M1126 381L1119 389 1106 408 1102 420 1100 429V455L1107 468 1119 487 1137 501 1153 522 1173 539',
  'M1175 526L1176 539 1167 540 1159 542',
  'M1143 479L1150 495 1167 515 1175 523 1198 540M1189 515L1197 535 1198 540M1179 538H1197',
  'M1203 492L1204 508 1207 518M1211 497L1208 507 1207 518',
  'M1164 548L1168 549 1172 551H1235L1242 549H1272',
  'M1245 514V530L1242 538 1237 553M1233 544L1234 550 1237 553 1242 547',
  'M1257 483L1258 489 1261 493 1267 494 1269 489V484L1262 483 1260 487 1266 490',
  'M1273 478L1277 479 1288 480M1281 480L1283 497',
  'M1301 475L1304 484 1305 496V467L1311 475 1316 471 1318 474 1317 493',
  'M1325 494V467L1334 492M1322 483L1336 484'
].forEach(d => add(ink, 'path', { d }));

// price scale
const s = add(scale, 'g', { transform: `translate(0 ${-TOP})` });
add(s, 'path', { d: 'M.5 124V785M.5 786V924', stroke: '#000' });
for (const p of [1.44875, 1.4468, 1.4448, 1.44285, 1.4409, 1.43895, 1.43695, 1.43305, 1.4311, 1.4291, 1.42715, 1.4252, 1.42325, 1.42125, 1.4193]) {
  const y = priceY(p);
  add(s, 'path', { d: `M0 ${y + 0.5}h3`, stroke: '#000' });
  add(s, 'text', { x: 7, y: y + 5 }, p.toFixed(5));
}
add(s, 'text', { x: 4, y: 800 }, '0.006648');
add(s, 'text', { x: 4, y: 865 }, '0.00');

function tag(y, text, color, x) {
  add(s, 'rect', { x: 2, y: y - 6, width: 56, height: 14, fill: color });
  add(s, 'text', { x: x || 7, y: y + 6, fill: '#fff' }, text);
}
for (const p of [1.45, 1.445, 1.44, 1.435, 1.43, 1.4275, 1.425, 1.42274, 1.42]) tag(priceY(p), p.toFixed(5), '#a9a9a9');
tag(priceY(1.42432), '1.42432', '#000');
tag(priceY(1.44253), '1.44253', '#40e0d0');
tag(priceY(1.43264), '1.43264', '#40e0d0');
tag(839, '0.001936', '#da70d6', 6);
tag(913, '-0.004832', '#a9a9a9', 6);

// traffic indicator in the status bar
const traffic = document.getElementById('traffic');
for (let i = 0; i < 8; i++) {
  add(traffic, 'rect', { x: i * 4, y: 0, width: 3, height: 17 - i * 2, fill: '#5b7a0a' });
  add(traffic, 'rect', { x: i * 4, y: 18 - i * 2, width: 3, height: 6 + i * 2, fill: '#0a3f5c' });
}
```
